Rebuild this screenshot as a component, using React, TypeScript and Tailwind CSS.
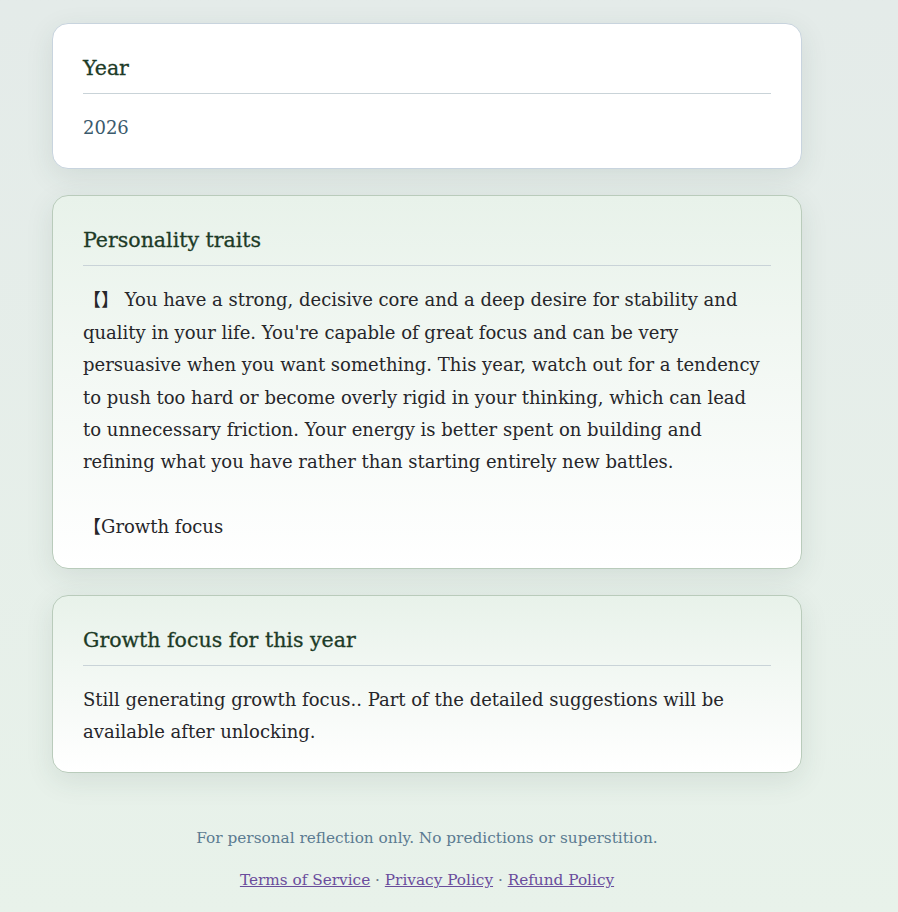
import React from "react";

const serif = "font-['DejaVu_Serif','Noto_Sans_CJK_SC',serif]";

function Card({
  title,
  children,
  tinted = false,
}: {
  title: string;
  children: React.ReactNode;
  tinted?: boolean;
}) {
  return (
    <section
      className={
        tinted
          ? "rounded-[16px] border border-[#b9cbbb] bg-gradient-to-b from-[#e8f2ea] to-[#ffffff] px-[30px] pt-[29px] pb-[24px] shadow-[0_8px_28px_rgba(40,70,55,0.10)]"
          : "rounded-[16px] border border-[#c8d4de] bg-white px-[30px] pt-[29px] pb-[24px] shadow-[0_8px_28px_rgba(40,70,55,0.10)]"
      }
    >
      <h2 className="border-b border-[#c9d3d8] pb-[10px] text-[20.5px] leading-[30px] text-[#1d3b27] [-webkit-text-stroke:0.3px_#1d3b27]">
        {title}
      </h2>
      <div className="mt-[18px]">{children}</div>
    </section>
  );
}

export default function App() {
  return (
    <main className={`min-h-screen bg-gradient-to-b from-[#e4ebe9] to-[#e8f2ea] pt-[23px] pb-[20px] ${serif}`}>
      <div className="ml-[52px] flex w-[750px] flex-col gap-[26px]">
        <Card title="Year">
          <p className="text-[18px] leading-[32.4px] text-[#3b5a6d]">2026</p>
        </Card>

        <Card title="Personality traits" tinted>
          <p className="whitespace-pre-line pr-[4px] text-[18px] leading-[32.4px] text-[#26262a]">
            {"【】 You have a strong, decisive core and a deep desire for stability and quality in your life. You're capable of great focus and can be very persuasive when you want something. This year, watch out for a tendency to push too hard or become overly rigid in your thinking, which can lead to unnecessary friction. Your energy is better spent on building and refining what you have rather than starting entirely new battles.\n\n【Growth focus"}
          </p>
        </Card>

        <Card title="Growth focus for this year" tinted>
          <p className="text-[18px] leading-[32.4px] text-[#26262a]">
            Still generating growth focus.. Part of the detailed suggestions will be available after unlocking.
          </p>
        </Card>

        <footer className="mt-[27px] flex flex-col items-center gap-[17px] text-[15.3px] leading-[25px]">
          <p className="text-[#5b7b91]">For personal reflection only. No predictions or superstition.</p>
          <p className="text-[#6b7a88]">
            <a href="#" className="text-[#6a4c9c] underline">Terms of Service</a>
            {" · "}
            <a href="#" className="text-[#6a4c9c] underline">Privacy Policy</a>
            {" · "}
            <a href="#" className="text-[#6a4c9c] underline">Refund Policy</a>
          </p>
        </footer>
      </div>
    </main>
  );
}
